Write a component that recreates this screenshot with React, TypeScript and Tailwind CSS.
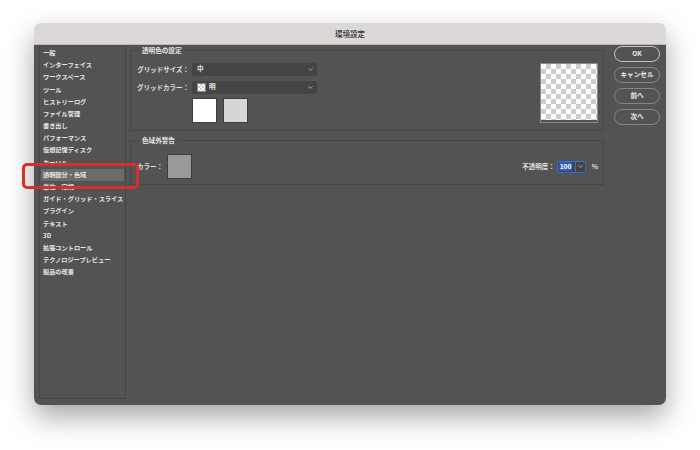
import { ChevronDown } from 'lucide-react'

const items = [
  '一般',
  'インターフェイス',
  'ワークスペース',
  'ツール',
  'ヒストリーログ',
  'ファイル管理',
  '書き出し',
  'パフォーマンス',
  '仮想記憶ディスク',
  'カーソル',
  '透明部分・色域',
  '単位・定規',
  'ガイド・グリッド・スライス',
  'プラグイン',
  'テキスト',
  '3D',
  '拡張コントロール',
  'テクノロジープレビュー',
  '製品の改善',
]

function Checker({ size, cell }: { size: number; cell: number }) {
  const n = Math.ceil(size / cell)
  const rects = []
  for (let r = 0; r < n; r++)
    for (let c = 0; c < n; c++)
      if ((r + c) % 2 === 1) rects.push(<rect key={r + '-' + c} x={c * cell} y={r * cell} width={cell} height={cell} fill="#cdcdcd" />)
  return (
    <svg width={size} height={size} className="block">
      <rect width={size} height={size} fill="#fff" />
      {rects}
    </svg>
  )
}

function Select({ children }: { children: React.ReactNode }) {
  return (
    <div className="flex h-[13px] w-[125px] items-center justify-between rounded-[2px] bg-[#444444] pl-[5px] pr-[3px] text-[#e8e8e8]">
      <div className="flex items-center gap-[3px]">{children}</div>
      <ChevronDown size={7} strokeWidth={2.5} className="text-[#cfcfcf]" />
    </div>
  )
}

function Btn({ label, primary }: { label: string; primary?: boolean }) {
  return (
    <div
      className={
        'flex h-[16px] w-[46px] items-center justify-center rounded-full border text-[6.6px] font-bold text-[#ececec] ' +
        (primary ? 'border-[#c4c4c4]' : 'border-[#868686]')
      }
    >
      {label}
    </div>
  )
}

export default function App() {
  return (
    <div
      className="relative h-[450px] w-[700px] overflow-hidden bg-white pl-[34px] pt-[23px]"
      style={{ fontFamily: '"Noto Sans CJK JP", "Noto Sans", sans-serif' }}
    >
      <div className="flex h-[382px] w-[632px] flex-col overflow-hidden rounded-[7px] shadow-[0_12px_28px_rgba(0,0,0,0.35)]">
        {/* title bar */}
        <div className="flex h-[22px] items-center justify-center border-b border-[#bcb8b8] bg-[#ddd8d8] text-[7.5px] font-medium text-[#2c2c2c]">
          環境設定
        </div>

        <div className="flex flex-1 bg-[#535353] pb-[6px] pl-[5px] pr-[6px] pt-[1px]">
          {/* sidebar */}
          <div className="flex w-[87px] flex-col border border-[#464646]">
            {items.map((t) => (
              <div
                key={t}
                className={
                  'mx-[1px] flex h-[12.2px] items-center whitespace-nowrap pl-[2px] text-[6.2px] font-bold leading-none text-[#e6e6e6] ' +
                  (t === '透明部分・色域' ? 'bg-[#6b6b6b]' : '')
                }
              >
                {t}
              </div>
            ))}
          </div>

          {/* main */}
          <div className="ml-[4px] flex w-[474px] flex-col">
            <fieldset className="mt-[0px] h-[85px] border border-[#474747] px-0">
              <legend className="ml-[8px] px-[3px] text-[6.6px] font-bold text-[#e6e6e6]">透明色の設定</legend>
              <div className="flex">
                <div className="flex flex-col pt-[7px]">
                  <div className="flex items-center">
                    <div className="w-[58px] whitespace-nowrap text-right text-[6.5px] font-bold text-[#e2e2e2]">グリッドサイズ：</div>
                    <div className="ml-[3px] text-[6.6px] font-bold">
                      <Select>中</Select>
                    </div>
                  </div>
                  <div className="mt-[5px] flex items-center">
                    <div className="w-[58px] whitespace-nowrap text-right text-[6.5px] font-bold text-[#e2e2e2]">グリッドカラー：</div>
                    <div className="ml-[3px] text-[6.6px] font-bold">
                      <Select>
                        <span className="border border-[#888]">
                          <Checker size={7} cell={2} />
                        </span>
                        明
                      </Select>
                    </div>
                  </div>
                  <div className="ml-[61px] mt-[4px] flex gap-[6px]">
                    <div className="h-[25px] w-[25px] border border-[#3e3e3e] bg-white" />
                    <div className="h-[25px] w-[25px] border border-[#3e3e3e] bg-[#d6d6d6]" />
                  </div>
                </div>
                <div className="ml-auto mr-[5px] mt-[7px] border border-[#8a8a8a]">
                  <Checker size={56} cell={5} />
                </div>
              </div>
            </fieldset>

            <fieldset className="mt-[5px] h-[49px] border border-[#474747] px-0">
              <legend className="ml-[8px] px-[3px] text-[6.6px] font-bold text-[#e6e6e6]">色域外警告</legend>
              <div className="flex items-center pt-[8px]">
                <div className="ml-[4px] w-[28px] whitespace-nowrap text-right text-[6.5px] font-bold text-[#e2e2e2]">カラー：</div>
                <div className="ml-[4px] h-[25px] w-[25px] border border-[#3e3e3e] bg-[#999999]" />
                <div className="ml-auto flex items-center pt-[1px]">
                  <div className="text-[6.5px] font-bold text-[#e2e2e2]">不透明度：</div>
                  <div className="ml-[2px] flex h-[12px] w-[29px] items-center rounded-[2px] border-[1.5px] border-[#2e6fd4] bg-[#444444]">
                    <span className="ml-[1px] bg-[#2e5fb8] px-[1px] text-[6.6px] font-bold leading-[9px] text-white">100</span>
                    <span className="ml-auto h-full border-l border-[#2e6fd4]" />
                    <ChevronDown size={7} strokeWidth={2.5} className="mx-[1px] text-[#cfcfcf]" />
                  </div>
                  <div className="ml-[6px] mr-[5px] text-[6.6px] font-bold text-[#e2e2e2]">%</div>
                </div>
              </div>
            </fieldset>
          </div>

          {/* buttons */}
          <div className="ml-[10px] flex flex-col gap-[5px]">
            <Btn label="OK" primary />
            <Btn label="キャンセル" />
            <Btn label="前へ" />
            <Btn label="次へ" />
          </div>
        </div>
      </div>

      {/* red highlight overlay */}
      <div className="absolute left-[22px] top-[163px] h-[26px] w-[117px] rounded-[5px] border-[3px] border-[#d5302b]" />
    </div>
  )
}
